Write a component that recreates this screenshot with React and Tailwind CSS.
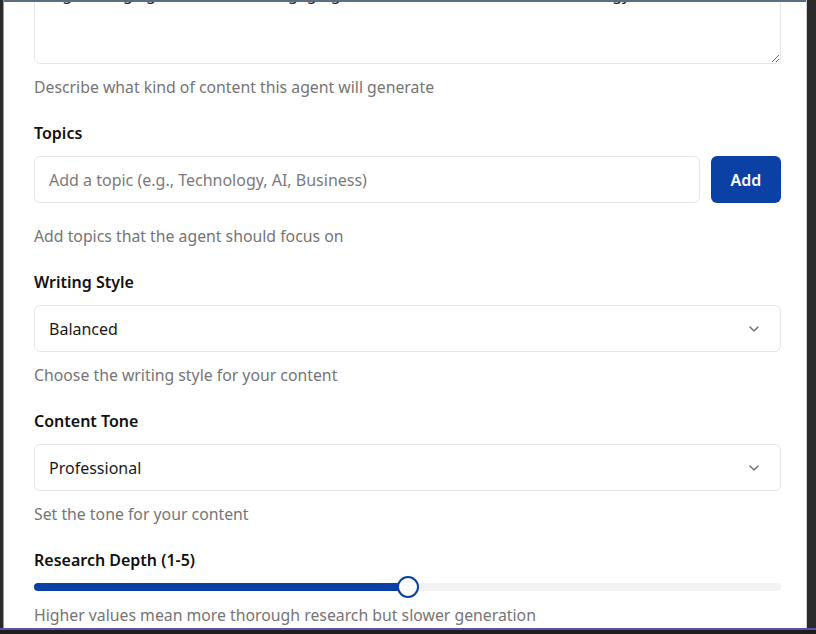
import { ChevronDown } from "lucide-react";

const FONT = { fontFamily: '"Noto Sans", "Open Sans", sans-serif' };

function Label({ children }) {
  return <p className="text-[16px] font-semibold leading-6 text-[#111111]">{children}</p>;
}

function Hint({ children, className = "" }) {
  return <p className={`text-[15.8px] leading-6 text-[#757575] ${className}`}>{children}</p>;
}

function SelectBox({ value }) {
  return (
    <div className="mt-[11px] flex h-[47px] items-center justify-between rounded-md border border-[#e6e6e6] bg-white pl-[14px] pr-[18px]">
      <span className="text-[16px] text-[#1a1a1a]">{value}</span>
      <ChevronDown size={16} strokeWidth={2} className="text-[#6b6b6b]" />
    </div>
  );
}

export default function App() {
  return (
    <div className="flex h-[634px] w-[816px] flex-col overflow-hidden bg-[#2b2b2b]" style={FONT}>
      <div className="flex min-h-0 flex-1">
        <div className="w-[3px] bg-[#2b2b2b]" />
        <div className="w-[1px] bg-[#9a9a9a]" />
        <div className="flex min-w-0 flex-1 flex-col">
          <div className="h-[2px] bg-[#5a6e80]" />
          <div className="min-h-0 flex-1 overflow-hidden bg-white pl-[30px] pr-[25px]">
            <textarea
              readOnly
              defaultValue="e.g., A blog agent that writes engaging, informative articles about technology"
              className="-mt-[28px] block h-[90px] w-full resize rounded-md border border-[#e6e6e6] px-[14px] pb-[12px] pt-[7px] text-[16px] leading-6 text-[#1a1a1a] outline-none"
            />
            <Hint className="mt-[11px]">Describe what kind of content this agent will generate</Hint>

            <div className="mt-[22px]">
              <Label>Topics</Label>
              <div className="mt-[11px] flex gap-[11px]">
                <input
                  placeholder="Add a topic (e.g., Technology, AI, Business)"
                  className="h-[47px] flex-1 rounded-md border border-[#e6e6e6] px-[14px] text-[16px] text-[#1a1a1a] outline-none placeholder:text-[#7a7a7a]"
                />
                <button className="h-[47px] w-[70px] rounded-md bg-[#0b40a5] text-[16px] font-semibold text-white">
                  Add
                </button>
              </div>
              <Hint className="mt-[21px]">Add topics that the agent should focus on</Hint>
            </div>

            <div className="mt-[22px]">
              <Label>Writing Style</Label>
              <SelectBox value="Balanced" />
              <Hint className="mt-[11px]">Choose the writing style for your content</Hint>
            </div>

            <div className="mt-[22px]">
              <Label>Content Tone</Label>
              <SelectBox value="Professional" />
              <Hint className="mt-[11px]">Set the tone for your content</Hint>
            </div>

            <div className="mt-[22px]">
              <Label>Research Depth (1-5)</Label>
              <div className="relative mt-[4px] h-[22px]">
                <div className="absolute left-0 right-0 top-[7px] h-[8px] rounded-full bg-[#f2f2f2]" />
                <div className="absolute left-0 top-[7px] h-[8px] w-1/2 rounded-full bg-[#0b40a5]" />
                <div className="absolute left-1/2 top-0 h-[22px] w-[22px] -translate-x-1/2 rounded-full border-2 border-[#0b40a5] bg-white" />
              </div>
              <Hint className="mt-[5px]">Higher values mean more thorough research but slower generation</Hint>
            </div>
          </div>
        </div>
        <div className="w-[1px] bg-[#d0d0d0]" />
        <div className="w-[9px] bg-[#2b2b2b]" />
      </div>
      <div className="h-[2px] bg-[#5c4fb0]" />
      <div className="h-[4px] bg-[#1e1e1e]" />
    </div>
  );
}
